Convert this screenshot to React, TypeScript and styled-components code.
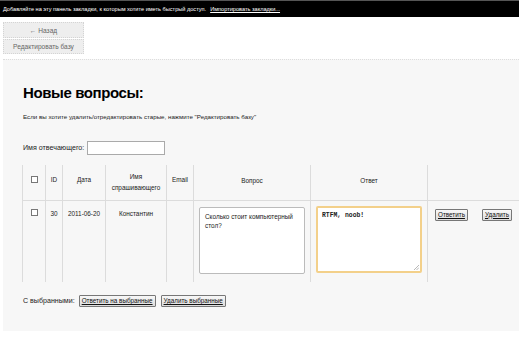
import React from 'react'
import styled, { createGlobalStyle } from 'styled-components'

const GlobalStyle = createGlobalStyle`
  html, body {
    margin: 0;
    padding: 0;
    background: #ffffff;
    font-family: 'Liberation Sans', Arial, sans-serif;
  }
`

const BookmarkBar = styled.div`
  height: 17px;
  background: #000;
  border-top: 1px solid #555;
  box-sizing: border-box;
  display: flex;
  align-items: center;
  padding-left: 3px;
  gap: 4px;
  color: #fff;
  font-size: 5.6px;
  white-space: nowrap;
`

const BarLink = styled.span`
  text-decoration: underline;
`

const NavBlock = styled.div`
  display: flex;
  flex-direction: column;
  width: 81px;
  margin: 5px 0 0 3px;
`

const NavButton = styled.div<{ $h: number }>`
  height: ${({ $h }) => $h}px;
  box-sizing: border-box;
  background: #eeeeee;
  border: 1px dotted #d4d4d4;
  display: flex;
  align-items: center;
  justify-content: center;
  color: #666;
  font-size: 6.6px;
  & + & {
    margin-top: 1px;
  }
`

const Main = styled.div`
  margin: 5px 0 0 3px;
  border-top: 1px dotted #ddd;
  background: #f7f7f7;
  height: 272px;
  box-sizing: border-box;
  padding: 0 0 0 20px;
  display: flex;
  flex-direction: column;
`

const Title = styled.h1`
  margin: 24px 0 0;
  font-size: 15px;
  letter-spacing: -0.4px;
  line-height: 18px;
  font-weight: bold;
  color: #000;
`

const Hint = styled.p`
  margin: 11px 0 0;
  font-size: 6.2px;
  line-height: 8px;
  color: #222;
`

const NameRow = styled.div`
  display: flex;
  align-items: center;
  gap: 3px;
  margin-top: 20px;
  font-size: 7.1px;
  color: #222;
`

const NameInput = styled.div`
  width: 78px;
  height: 14px;
  box-sizing: border-box;
  background: #fff;
  border: 1px solid #aaa;
`

const Table = styled.table`
  margin: 10px 0 0 -1px;
  border-collapse: collapse;
  table-layout: fixed;
  width: 497px;
  font-size: 6.4px;
  color: #222;
`

const Cell = styled.td<{ $last?: boolean; $pad?: string; $left?: boolean }>`
  vertical-align: top;
  text-align: ${({ $left }) => ($left ? 'left' : 'center')};
  padding: ${({ $pad }) => $pad || '9px 2px 0'};
  border-left: 1px solid #dcdcdc;
  border-right: ${({ $last }) => ($last ? 'none' : '1px solid #dcdcdc')};
  line-height: 11px;
`

const HeadRow = styled.tr`
  height: 35px;
  & > td {
    border-bottom: 1px solid #dcdcdc;
  }
`

const BodyRow = styled.tr`
  height: 82px;
`

const Check = styled.span`
  display: inline-block;
  width: 7px;
  height: 7px;
  box-sizing: border-box;
  border: 1px solid #777;
  background: #fff;
  margin-top: 2px;
`

const Area = styled.div<{ $focus?: boolean; $mono?: boolean }>`
  width: 106px;
  height: 67px;
  box-sizing: border-box;
  background: #fff;
  border: ${({ $focus }) => ($focus ? '2px solid #f3d08a' : '1px solid #bbb')};
  border-radius: 2px;
  padding: ${({ $focus }) => ($focus ? '3px 4px' : '4px 5px')};
  text-align: left;
  font-family: ${({ $mono }) => ($mono ? "'Liberation Mono', monospace" : 'inherit')};
  font-weight: ${({ $mono }) => ($mono ? 'bold' : 'normal')};
  font-size: 6.4px;
  line-height: 9px;
  position: relative;
`

const Grip = styled.svg`
  position: absolute;
  right: 1px;
  bottom: 1px;
`

const SmallButton = styled.span`
  display: inline-block;
  box-sizing: border-box;
  height: 12px;
  padding: 0 2px;
  background: linear-gradient(#f8f8f8, #dddddd);
  border: 1px solid #777;
  border-radius: 1px;
  font-size: 6.3px;
  line-height: 10px;
  color: #111;
  text-decoration: underline;
  white-space: nowrap;
`

const Actions = styled.div`
  display: flex;
  justify-content: space-between;
  padding: 0 7px 0 7px;
`

const BulkRow = styled.div`
  display: flex;
  align-items: center;
  gap: 4px;
  margin-top: 13px;
  font-size: 7.1px;
  color: #222;
`

const BulkButtons = styled.div`
  display: flex;
  gap: 5px;
`

export default function App() {
  return (
    <>
      <GlobalStyle />
      <BookmarkBar>
        <span>Добавляйте на эту панель закладки, к которым хотите иметь быстрый доступ.</span>
        <BarLink>Импортировать закладки...</BarLink>
      </BookmarkBar>
      <NavBlock>
        <NavButton $h={16}>← Назад</NavButton>
        <NavButton $h={15}>Редактировать базу</NavButton>
      </NavBlock>
      <Main>
        <Title>Новые вопросы:</Title>
        <Hint>Если вы хотите удалить/отредактировать старые, нажмите "Редактировать базу"</Hint>
        <NameRow>
          Имя отвечающего:
          <NameInput />
        </NameRow>
        <Table>
          <colgroup>
            <col style={{ width: 23 }} />
            <col style={{ width: 17 }} />
            <col style={{ width: 43 }} />
            <col style={{ width: 61 }} />
            <col style={{ width: 27 }} />
            <col style={{ width: 117 }} />
            <col style={{ width: 117 }} />
            <col />
          </colgroup>
          <tbody>
            <HeadRow>
              <Cell><Check /></Cell>
              <Cell>ID</Cell>
              <Cell>Дата</Cell>
              <Cell $pad="6px 2px 0">Имя спрашивающего</Cell>
              <Cell>Email</Cell>
              <Cell $pad="10px 2px 0">Вопрос</Cell>
              <Cell $pad="10px 2px 0">Ответ</Cell>
              <Cell $last />
            </HeadRow>
            <BodyRow>
              <Cell $pad="6px 2px 0"><Check /></Cell>
              <Cell $pad="7px 2px 0">30</Cell>
              <Cell $pad="7px 2px 0">2011-06-20</Cell>
              <Cell $pad="7px 2px 0">Константин</Cell>
              <Cell />
              <Cell $pad="6px 5px 0">
                <Area>Сколько стоит компьютерный стол?</Area>
              </Cell>
              <Cell $pad="5px 5px 0">
                <Area $focus $mono>
                  RTFM, noob!
                  <Grip width="5" height="5" viewBox="0 0 5 5">
                    <path d="M5 0L0 5M5 2.5L2.5 5" stroke="#999" strokeWidth="0.7" />
                  </Grip>
                </Area>
              </Cell>
              <Cell $last $pad="8px 0 0">
                <Actions>
                  <SmallButton>Ответить</SmallButton>
                  <SmallButton>Удалить</SmallButton>
                </Actions>
              </Cell>
            </BodyRow>
          </tbody>
        </Table>
        <BulkRow>
          С выбранными:
          <BulkButtons>
            <SmallButton>Ответить на выбранные</SmallButton>
            <SmallButton>Удалить выбранные</SmallButton>
          </BulkButtons>
        </BulkRow>
      </Main>
    </>
  )
}
